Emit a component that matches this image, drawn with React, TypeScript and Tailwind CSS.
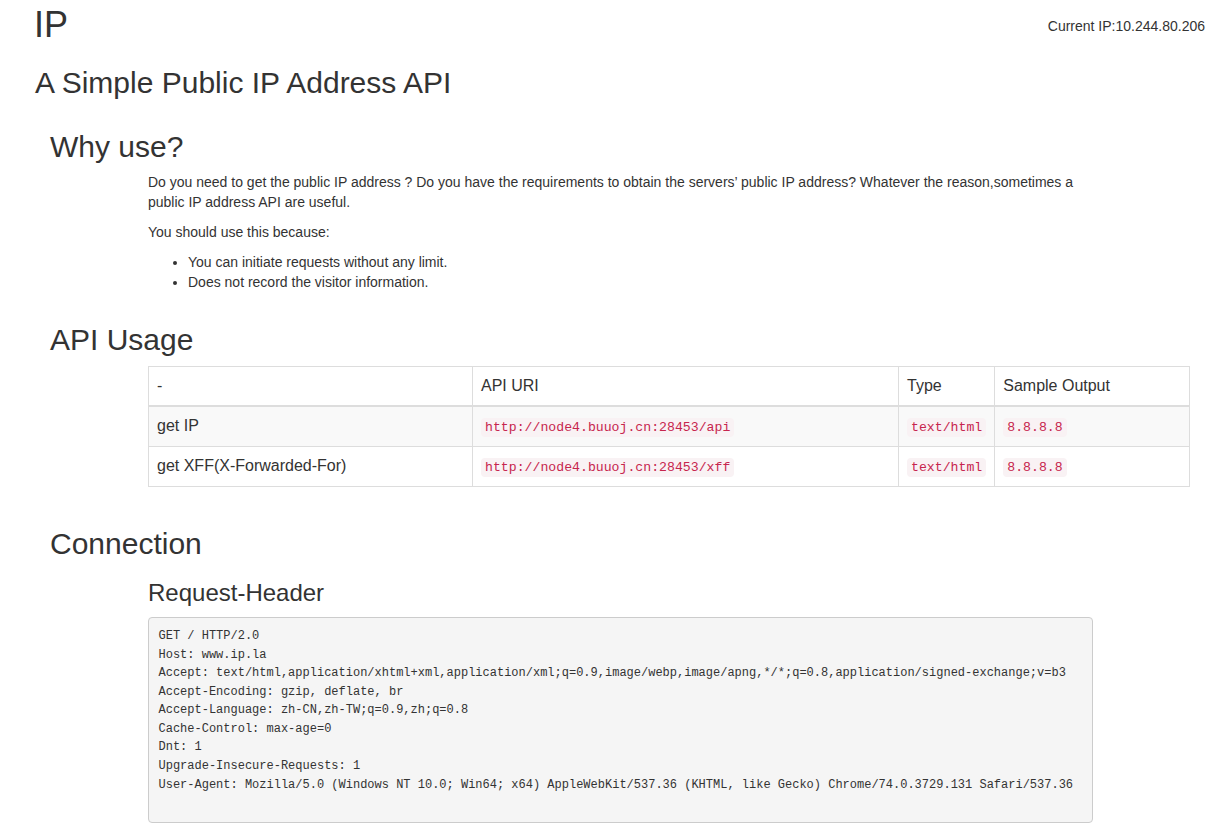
const headers = `GET / HTTP/2.0
Host: www.ip.la
Accept: text/html,application/xhtml+xml,application/xml;q=0.9,image/webp,image/apng,*/*;q=0.8,application/signed-exchange;v=b3
Accept-Encoding: gzip, deflate, br
Accept-Language: zh-CN,zh-TW;q=0.9,zh;q=0.8
Cache-Control: max-age=0
Dnt: 1
Upgrade-Insecure-Requests: 1
User-Agent: Mozilla/5.0 (Windows NT 10.0; Win64; x64) AppleWebKit/537.36 (KHTML, like Gecko) Chrome/74.0.3729.131 Safari/537.36`;

const rows = [
  { name: 'get IP', uri: 'http://node4.buuoj.cn:28453/api' },
  { name: 'get XFF(X-Forwarded-For)', uri: 'http://node4.buuoj.cn:28453/xff' },
];

const Code = ({ children }: { children: string }) => (
  <code className="rounded-[4px] bg-[#f9f2f4] px-[4px] py-[2px] font-['Liberation_Mono',monospace] text-[13.2px] leading-none text-[#c7254e]">
    {children}
  </code>
);

const App = () => {
  return (
    <div className="min-h-screen bg-white font-['Liberation_Sans',Arial,sans-serif] text-[14px] leading-[20px] text-[#333]">
      {/* Header */}
      <div className="flex items-start justify-between pl-[34px] pr-[4px]">
        <h1 className="pt-[5px] text-[36px] leading-[39.6px]">IP</h1>
        <div className="mt-[16px]">Current IP:10.244.80.206</div>
      </div>
      <h2 className="ml-[35px] mt-[21px] text-[30px] leading-[33px]">A Simple Public IP Address API</h2>

      {/* Why use */}
      <section className="pl-[50px]">
        <h2 className="mt-[31px] mb-[9px] text-[30px] leading-[33px]">Why use?</h2>
        <div className="pl-[98px]">
          <p className="mb-[10px] w-[945px]">
            Do you need to get the public IP address ? Do you have the requirements to obtain the servers’ public IP address? Whatever the reason,sometimes a public IP address API are useful.
          </p>
          <p className="mb-[10px]">You should use this because:</p>
          <ul className="mb-[10px] list-disc pl-[40px]">
            <li>You can initiate requests without any limit.</li>
            <li>Does not record the visitor information.</li>
          </ul>
        </div>
      </section>

      {/* API Usage */}
      <section className="pl-[50px]">
        <h2 className="mt-[31px] mb-[10px] text-[30px] leading-[33px]">API Usage</h2>
        <div className="pl-[98px]">
          <table className="w-[1042px] border-collapse border border-[#ddd] text-[16px] leading-[22.86px]">
            <thead>
              <tr>
                <th className="w-[324px] border border-b-2 border-[#ddd] p-[8px] text-left font-normal">-</th>
                <th className="w-[426px] border border-b-2 border-[#ddd] p-[8px] text-left font-normal">API URI</th>
                <th className="w-[96px] border border-b-2 border-[#ddd] p-[8px] text-left font-normal">Type</th>
                <th className="border border-b-2 border-[#ddd] p-[8px] text-left font-normal">Sample Output</th>
              </tr>
            </thead>
            <tbody>
              {rows.map((r, i) => (
                <tr key={r.uri} className={i % 2 === 0 ? 'bg-[#f9f9f9]' : ''}>
                  <td className="border border-[#ddd] p-[8px]">{r.name}</td>
                  <td className="border border-[#ddd] p-[8px]"><Code>{r.uri}</Code></td>
                  <td className="border border-[#ddd] p-[8px]"><Code>text/html</Code></td>
                  <td className="border border-[#ddd] p-[8px]"><Code>8.8.8.8</Code></td>
                </tr>
              ))}
            </tbody>
          </table>
        </div>
      </section>

      {/* Connection */}
      <section className="pl-[50px]">
        <h2 className="mt-[40px] mb-[10px] text-[30px] leading-[33px]">Connection</h2>
        <div className="pl-[98px]">
          <h3 className="mt-[20px] mb-[10px] text-[24px] leading-[26.4px]">Request-Header</h3>
          <pre className="box-border h-[206px] w-[945px] rounded-[4px] border border-[#ccc] bg-[#f5f5f5] p-[9.5px] font-['Liberation_Mono',monospace] text-[12px] leading-[18.57px] text-[#333]">
            {headers}
          </pre>
        </div>
      </section>
    </div>
  );
};

export default App;
